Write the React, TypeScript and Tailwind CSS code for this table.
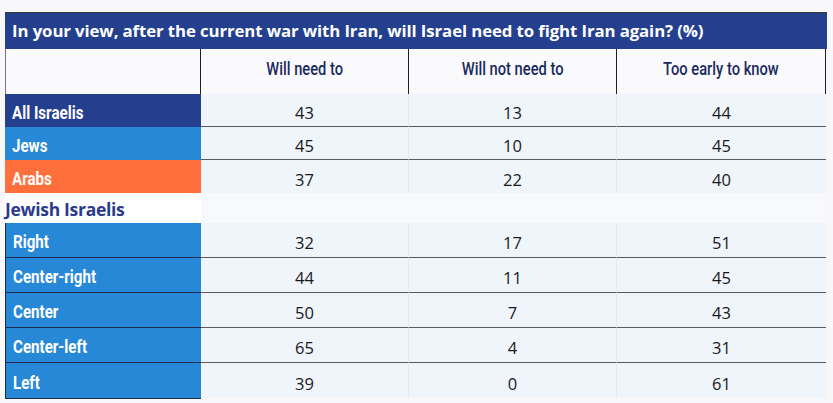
import React from 'react';

const title = 'In your view, after the current war with Iran, will Israel need to fight Iran again? (%)';
const cols = ['Will need to', 'Will not need to', 'Too early to know'];

type Row = { label: string; values: number[]; color: string };

const topRows: Row[] = [
  { label: 'All Israelis', values: [43, 13, 44], color: 'bg-[#253f8f]' },
  { label: 'Jews', values: [45, 10, 45], color: 'bg-[#2888d8]' },
  { label: 'Arabs', values: [37, 22, 40], color: 'bg-[#ff6f3c]' },
];

const jewishRows: Row[] = [
  { label: 'Right', values: [32, 17, 51], color: 'bg-[#2888d8]' },
  { label: 'Center-right', values: [44, 11, 45], color: 'bg-[#2888d8]' },
  { label: 'Center', values: [50, 7, 43], color: 'bg-[#2888d8]' },
  { label: 'Center-left', values: [65, 4, 31], color: 'bg-[#2888d8]' },
  { label: 'Left', values: [39, 0, 61], color: 'bg-[#2888d8]' },
];

// condensed look: Roboto squeezed horizontally
const narrow = "font-['Roboto',sans-serif] inline-block scale-x-[0.84] whitespace-nowrap";
const numFont = "font-['Open_Sans',sans-serif]";

const DataRow: React.FC<{ row: Row; h: string; lined: boolean; lowerLabel?: boolean }> = ({ row, h, lined, lowerLabel }) => (
  <div className={`grid grid-cols-[196px_208px_208px_209px] ${h}`}>
    <div
      className={`${row.color} flex items-center pl-[7px] pt-[3px] ${
        lowerLabel ? 'border-l border-[#1d2b4a]' : ''
      } ${lowerLabel && lined ? 'border-b border-[#1d2b4a]' : ''}`}
    >
      <span className={`${narrow} origin-left text-[18px] font-bold text-white`}>{row.label}</span>
    </div>
    {row.values.map((v, i) => (
      <div
        key={i}
        className={`bg-[#f0f4fb] ${numFont} flex items-center justify-center pt-[7px] text-[16.5px] text-[#1a1a1a] ${
          lined ? 'border-b border-[#5a5a5a]' : ''
        } ${i < 2 ? 'border-r border-r-[#e4e8f0]' : ''}`}
      >
        {v}
      </div>
    ))}
  </div>
);

const App: React.FC = () => {
  return (
    <div className="min-h-screen w-[833px] h-[403px] bg-[#f8f8fb] pt-[12px] pl-[5px] overflow-hidden">
      <div className="w-[822px]">
        <div className="h-[37px] bg-[#253f8f] border-t border-[#3a3a3a] flex items-center pl-[7px]">
          <span className="font-['Open_Sans',sans-serif] text-[16.8px] font-bold text-white tracking-[-0.1px] whitespace-nowrap">{title}</span>
        </div>
        <div className="grid grid-cols-[196px_208px_208px_209px] h-[45px] bg-[#fafafd]">
          <div className="border-l border-[#777] border-r border-r-[#1f1f1f]" />
          {cols.map((c) => (
            <div key={c} className="flex items-center justify-center pb-[4px] border-r border-[#1f1f1f]">
              <span className={`${narrow} origin-center text-[17.5px] font-medium text-[#1b2a5c]`}>{c}</span>
            </div>
          ))}
        </div>
        {topRows.map((r, i) => (
          <DataRow key={r.label} row={r} h="h-[33px]" lined={i < 2} />
        ))}
        <div className="grid grid-cols-[196px_625px] h-[30px]">
          <div className="bg-white font-['Open_Sans',sans-serif] text-[17.5px] font-bold text-[#2b3a8c] flex items-center pt-[2px] tracking-[-0.3px]">
            Jewish Israelis
          </div>
          <div className="bg-[#f8f9fc]" />
        </div>
        {jewishRows.map((r, i) => (
          <DataRow key={r.label} row={r} h="h-[35px]" lined={i < 4} lowerLabel />
        ))}
        <div className="grid grid-cols-[196px_625px]">
          <div className="border-t border-[#1d2b4a]" />
        </div>
      </div>
    </div>
  );
};

export default App;
